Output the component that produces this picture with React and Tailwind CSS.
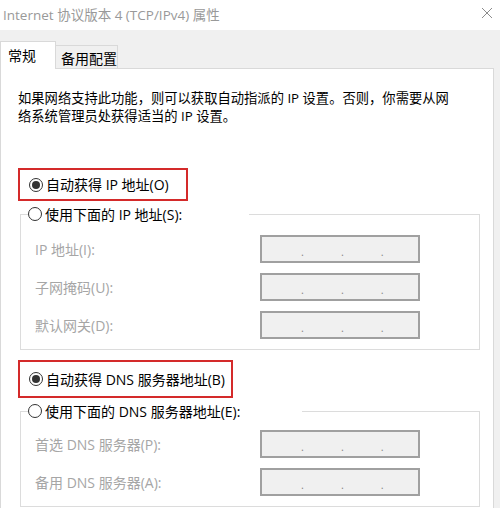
import React from 'react';

const FONT = { fontFamily: '"Open Sans", "Noto Sans CJK SC", sans-serif' };

function Radio({ checked }) {
  return (
    <span className="flex h-[14px] w-[14px] shrink-0 items-center justify-center rounded-full border border-[#333] bg-white">
      {checked && <span className="h-[8px] w-[8px] rounded-full bg-[#333]" />}
    </span>
  );
}

function IpBox() {
  return (
    <div className="flex h-[28px] w-[160px] items-center gap-[37px] border-2 border-[#a0a0a0] bg-[#f0f0f0] pl-[39px] pt-[4px] text-[11px] leading-none text-[#888]">
      <span>.</span>
      <span>.</span>
      <span>.</span>
    </div>
  );
}

function Row({ label }) {
  return (
    <div className="flex h-[28px] items-center">
      <span className="w-[225px] text-[14px] text-[#a6a6a6]">{label}</span>
      <IpBox />
    </div>
  );
}

export default function App() {
  return (
    <div className="h-[508px] w-[500px] overflow-hidden bg-[#f0f0f0] text-black" style={FONT}>
      {/* title bar */}
      <div className="flex h-[30px] items-center justify-between bg-white pl-[3px] pr-[7px]">
        <span className="text-[13.5px] text-[#999]">Internet 协议版本 4 (TCP/IPv4) 属性</span>
        <svg width="12" height="12" viewBox="0 0 12 12" className="mt-[-4px]">
          <path d="M1 1 L11 11 M11 1 L1 11" stroke="#8c8c8c" strokeWidth="1" />
        </svg>
      </div>

      <div className="pt-[10px]">
        {/* tabs */}
        <div className="flex h-[28px] items-end">
          <div className="relative z-10 -mb-px flex h-[28px] w-[56px] items-start border border-b-0 border-[#d9d9d9] bg-white pl-[7px] pt-[3px] text-[14px]">
            常规
          </div>
          <div className="flex h-[23px] w-[62px] items-center border border-b-0 border-l-0 border-[#d9d9d9] bg-[#f0f0f0] pl-[5px] pt-[2px] text-[14px]">
            备用配置
          </div>
        </div>

        {/* panel */}
        <div className="h-[460px] w-[494px] border border-[#d9d9d9] bg-white pl-[17px] pt-[20px]">
          <p className="text-[13.3px] leading-[18px]">
            如果网络支持此功能，则可以获取自动指派的 IP 设置。否则，你需要从网
            <br />
            络系统管理员处获得适当的 IP 设置。
          </p>

          <div className="mt-[43px] flex h-[33px] w-[170px] items-center gap-[3px] border-2 border-[#d42a2a] pl-[9px] text-[14px]">
            <Radio checked />
            <span>自动获得 IP 地址(O)</span>
          </div>

          <fieldset className="mt-[3px] ml-[2px] w-[460px] border border-[#dcdcdc] pb-[10px] pl-[14px]">
            <legend className="ml-[-7px] w-[221px]">
              <span className="flex h-[20px] items-center gap-[3px] text-[14px]">
                <Radio />
                <span>使用下面的 IP 地址(S):</span>
              </span>
            </legend>
            <div className="mt-[11px] flex flex-col gap-[10px]">
              <Row label="IP 地址(I):" />
              <Row label="子网掩码(U):" />
              <Row label="默认网关(D):" />
            </div>
          </fieldset>

          <div className="mt-[10px] flex h-[38px] w-[215px] items-center gap-[3px] border-2 border-[#d42a2a] pl-[9px] text-[14px]">
            <Radio checked />
            <span>自动获得 DNS 服务器地址(B)</span>
          </div>

          <fieldset className="mt-[3px] ml-[2px] w-[460px] border border-[#dcdcdc] pb-[10px] pl-[14px]">
            <legend className="ml-[-7px] w-[274px]">
              <span className="flex h-[20px] items-center gap-[3px] text-[14px]">
                <Radio />
                <span>使用下面的 DNS 服务器地址(E):</span>
              </span>
            </legend>
            <div className="mt-[9px] flex flex-col gap-[10px]">
              <Row label="首选 DNS 服务器(P):" />
              <Row label="备用 DNS 服务器(A):" />
            </div>
          </fieldset>
        </div>
      </div>
    </div>
  );
}
